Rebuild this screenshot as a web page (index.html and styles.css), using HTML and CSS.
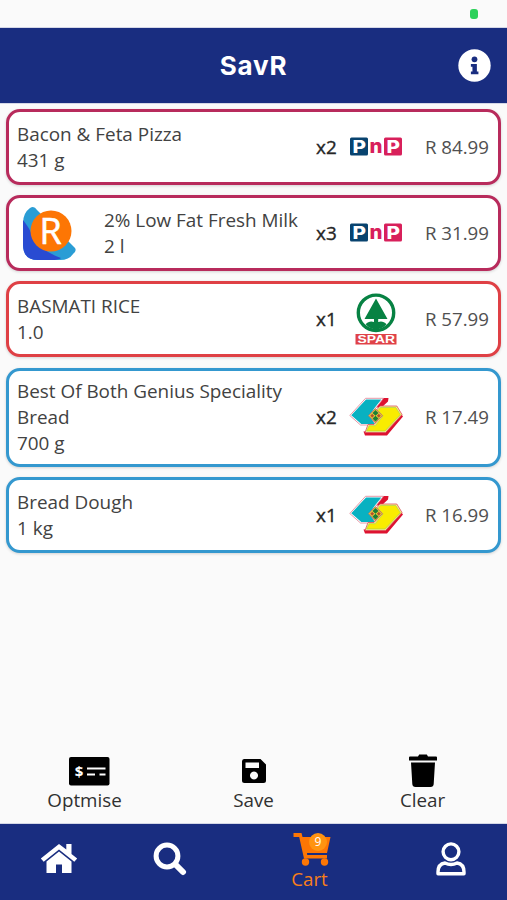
FILE: index.html
```html
<!DOCTYPE html>
<html lang="en">
<head>
<meta charset="utf-8">
<title>SavR</title>
<link rel="stylesheet" href="styles.css">
</head>
<body>
<svg class="defs" aria-hidden="true">
  <symbol id="sixty" viewBox="0 0 54 54">
    <path d="M34 8h5.500l-.5 3.500-6.500 6H27zM48 18.500l6 8-16 19H16l-1.500-4 20-1z" fill="#de1230"/>
    <path d="M16.500 8.300H34.500L28 16.500l-8 9.500 6 7.500-7 1.500H11.500L.8 25.500z" fill="#fff" stroke="#df7f90" stroke-width=".8"/>
    <path d="M17 9.500H32.300l-6 7.500-6 8.500 5.500 8.500H12.300L2.300 25.300z" fill="#08b1c1"/>
    <path d="M31 16h16.800l5.200 8.500L36.500 42.500H16l3-8h6l7.500-8.500-5-6z" fill="#fbf38a" stroke="#d8505f" stroke-width=".8"/>
    <path d="M31.500 17.500h15.300l4.600 7.200L36 41H17.500l2.700-5.300h6l7.800-9.700-5-5.500z" fill="#f9ec00" stroke="#9ccb50" stroke-width=".6"/>
    <path d="m26.500 18.700 7 7-7 7-7-7z" fill="#e3d33a" stroke="#c8705a" stroke-width="1"/>
    <path d="m26.500 20 3 3-3 2.700-3-2.700zm0 5.700 3 2.800-3 3-3-3z" fill="#1d7d35"/>
    <path d="m23.200 23.700 2 2-2 2-2-2zm6.600 0 2 2-2 2-2-2z" fill="#b5502c"/>
  </symbol>
</svg>
<div class="app">
  <div class="status"><span class="battery"></span></div>
  <header class="topbar">
    <h1>SavR</h1>
    <svg class="info" viewBox="0 0 32 32"><circle cx="16" cy="16" r="15.700" fill="#fff"/><circle cx="16" cy="10" r="2.800" fill="#192d80"/><path d="M12.500 14.500h5.800v7.200h1.500v2.800h-7.300v-2.800H14v-4.400h-1.500z" fill="#192d80"/></svg>
  </header>
  <main class="list">
    <article class="card pink">
      <div class="item">Bacon &amp; Feta Pizza<br>431 g</div>
      <div class="qty">x2</div>
      <svg class="store" viewBox="0 0 54 54">
        <rect x="1" y="17.500" width="18" height="18" rx="1.500" fill="#08436f"/>
        <rect x="35" y="17.500" width="18" height="18" rx="1.500" fill="#d8205b"/>
        <text class="pnp" x="3.500" y="32.500" textLength="13.500" lengthAdjust="spacingAndGlyphs">P</text>
        <text class="pnp pnp-n" x="20.500" y="33" textLength="13" lengthAdjust="spacingAndGlyphs">n</text>
        <text class="pnp" x="37.500" y="32.500" textLength="13.500" lengthAdjust="spacingAndGlyphs">P</text>
      </svg>
      <div class="price">R 84.99</div>
    </article>
    <article class="card pink">
      <svg class="product" viewBox="0 0 54 54">
        <path d="M1 17Q1 7 8 2Q12-1 15 4L53 42Q55 45 51 48Q47 54 38 54H16Q1 54 1 38z" fill="#2a9dd5"/>
        <path d="M1 14Q8 23 9 27Q18 45 39 52Q37 54 29 54H16Q1 54 1 39z" fill="#294bd2"/>
        <circle cx="29" cy="25" r="20.500" fill="#fd7604"/>
        <text class="product-letter" x="28.500" y="37.700">R</text>
      </svg>
      <div class="item">2% Low Fat Fresh Milk<br>2 l</div>
      <div class="qty">x3</div>
      <svg class="store" viewBox="0 0 54 54">
        <rect x="1" y="17.500" width="18" height="18" rx="1.500" fill="#08436f"/>
        <rect x="35" y="17.500" width="18" height="18" rx="1.500" fill="#d8205b"/>
        <text class="pnp" x="3.500" y="32.500" textLength="13.500" lengthAdjust="spacingAndGlyphs">P</text>
        <text class="pnp pnp-n" x="20.500" y="33" textLength="13" lengthAdjust="spacingAndGlyphs">n</text>
        <text class="pnp" x="37.500" y="32.500" textLength="13.500" lengthAdjust="spacingAndGlyphs">P</text>
      </svg>
      <div class="price">R 31.99</div>
    </article>
    <article class="card red">
      <div class="item">BASMATI RICE<br>1.0</div>
      <div class="qty">x1</div>
      <svg class="store" viewBox="0 0 54 54">
        <circle cx="27" cy="20.800" r="17.700" fill="#fff" stroke="#078243" stroke-width="3.400"/>
        <path d="M27 6.500 15.500 27h9.500v3c-2.500-1.200-6-.7-8.300 2.200C22 39 32 39 37.500 32.200c-2.300-2.900-5.800-3.400-8.300-2.200v-3h9.300z" fill="#078243"/>
        <rect x="6.500" y="42" width="41" height="10.500" fill="#e04248"/>
        <text class="spar-name" x="8.500" y="50.800" textLength="37.500" lengthAdjust="spacingAndGlyphs">SPAR</text>
      </svg>
      <div class="price">R 57.99</div>
    </article>
    <article class="card blue tall">
      <div class="item">Best Of Both Genius Speciality Bread<br>700 g</div>
      <div class="qty">x2</div><svg class="store"><use href="#sixty"/></svg><div class="price">R 17.49</div>
    </article>
    <article class="card blue">
      <div class="item">Bread Dough<br>1 kg</div>
      <div class="qty">x1</div><svg class="store"><use href="#sixty"/></svg><div class="price">R 16.99</div>
    </article>
  </main>
  <div class="actions">
    <div class="action">
      <svg class="cheque" width="42" height="34" viewBox="0 0 42 34"><rect x="1" y="3" width="40.500" height="28.500" rx="2"/><path d="M19 14.500h18.500M19 20.500h8M31.500 20.500h6" stroke="#fff" stroke-width="2.200"/><text class="dollar" x="11" y="22.500">$</text></svg>
      <span>Optmise</span>
    </div>
    <div class="action">
      <svg width="26" height="34" viewBox="0 0 26 34"><path fill-rule="evenodd" d="M3 5h16.500l5.500 5.500V26.500a2.500 2.500 0 0 1-2.500 2.500h-19A2.500 2.500 0 0 1 1 26.500V7.500A2.500 2.500 0 0 1 3 5zm1.500 3.500v5.500h13.500V8.500zM13 17.500a4 4 0 1 0 .01 0z"/></svg>
      <span>Save</span>
    </div>
    <div class="action">
      <svg width="30" height="34" viewBox="0 0 30 34"><path d="M2 2.500h8l1.200-2h7.600l1.200 2h8q1 0 1 1v3H1v-3q0-1 1-1zM3 8.500h24l-1.300 21.500q-.2 3-3.200 3h-15q-3 0-3.200-3z"/></svg>
      <span>Clear</span>
    </div>
  </div>
  <nav class="tabs">
    <div class="tab"><svg width="38" height="32" viewBox="0 0 38 32"><path d="M19 1 .8 15.500l2.900 3.300L19 6.500l15.300 12.300 2.900-3.300-5.700-4.600V1h-5.200v5.500zM19 8.500 6.500 18.500v11.500h9.500v-8.500h6v8.500h9.500V18.500z"/></svg></div>
    <div class="tab"><svg width="34" height="34" viewBox="0 0 34 34"><circle cx="14" cy="14" r="10.900" fill="none" stroke="#fff" stroke-width="5"/><path d="m22.500 22.500 7.500 7.500" stroke="#fff" stroke-width="6" stroke-linecap="round"/></svg></div>
    <div class="tab active">
      <svg width="38" height="34" viewBox="0 0 38 34"><path d="M.5 1h8l1 4H37.500L34 21H14l.5 2h19.500v3.500H11L6.200 5H.5z"/><circle cx="12.500" cy="30" r="3.700"/><circle cx="31.500" cy="30" r="3.700"/><path d="M14 22h20" stroke="#192d80" stroke-width="1.200"/><circle cx="25" cy="10" r="9" fill="#ff9410"/><text class="count" x="25" y="14.300">9</text></svg>
      <span>Cart</span>
    </div>
    <div class="tab person"><svg width="30" height="34" viewBox="0 0 30 34"><circle cx="15" cy="9.800" r="7.900"/><path d="M9 21q6 3 12 0 7 1 7 9v1.700H2V30q0-8 7-9z" stroke-linejoin="round"/></svg></div>
  </nav>
</div>
</body>
</html>
```

FILE: styles.css
```css
* { box-sizing: border-box; }
body { margin: 0; font-family: "Open Sans", sans-serif; background: #fafafa; color: #424242; }
.defs { display: none; }
.app { width: 507px; height: 900px; display: flex; flex-direction: column; overflow: hidden; }
.status { height: 28px; flex: none; display: flex; justify-content: flex-end; padding: 9px 29px 0 0; }
.battery { width: 8px; height: 10px; border-radius: 3px; background: #2ed15b; }
.topbar { height: 75px; flex: none; background: #192d80; display: grid; grid-template-columns: 1fr auto 1fr; align-items: center; padding: 0 16px; box-shadow: 0 0 1px #192d80; }
h1 { grid-column: 2; margin: 0; color: #fff; font: 700 26px/36px Inter, sans-serif; letter-spacing: .8px; }
.info { width: 33px; height: 33px; justify-self: end; }
.list { flex: 1; padding: 6px 6px 0; display: flex; flex-direction: column; gap: 10.500px; }
.card { height: 75.700px; flex: none; display: flex; align-items: center; border: 3px solid; border-radius: 14px; background: #fff; padding: 0 9px 0 8px; font-size: 18.900px; line-height: 25.700px; box-shadow: 0 1px 3px rgba(0, 0, 0, .16); }
.tall { height: 99px; }
.pink { border-color: #b82b5c; }
.red { border-color: #df4045; }
.blue { border-color: #3498cf; }
.item { flex: 1; color: #424242; padding-top: 1.500px; }
.product { width: 54px; height: 54px; margin: 0 28px 0 5px; flex: none; overflow: visible; }
.product-letter { font: 500 36px "Open Sans", sans-serif; fill: #fff; stroke: #fff; stroke-width: .6px; text-anchor: middle; }
.qty { width: 33px; flex: none; color: #262626; padding-top: 1.500px; -webkit-text-stroke: .35px #262626; }
.store { width: 54px; height: 54px; flex: none; }
.price { width: 86px; flex: none; text-align: right; color: #505050; font-size: 18.700px; }
.pnp { font: 800 17px Inter, sans-serif; fill: #fff; }
.pnp-n { font-size: 19px; fill: #d8205b; }
.spar-name { font: 700 10px "Liberation Sans", sans-serif; fill: #fff; }
.actions { height: 70px; flex: none; display: grid; grid-template-columns: repeat(3, 1fr); }
.action { display: flex; flex-direction: column; align-items: center; font-size: 18.800px; line-height: 24px; color: #303030; }
.action svg { fill: #000; }
.cheque { margin-left: 8px; }
.dollar { font: 700 15px "Open Sans", sans-serif; fill: #fff; text-anchor: middle; }
.tabs { height: 76px; flex: none; background: #192d80; display: grid; grid-template-columns: 118px 103px 177px 105px; box-shadow: 0 0 1px #192d80; }
.tab { display: flex; flex-direction: column; align-items: center; justify-content: center; padding-bottom: 6px; }
.tab svg { fill: #fff; }
.active { justify-content: flex-start; padding: 8px 0 0; color: #f77f19; font-size: 18.700px; line-height: 26px; }
.active svg { fill: #fd7604; margin-left: 4px; }
.person svg { fill: none; stroke: #fff; stroke-width: 3.400px; }
.count { font: 12px "Open Sans", sans-serif; fill: #fff; text-anchor: middle; }
```
